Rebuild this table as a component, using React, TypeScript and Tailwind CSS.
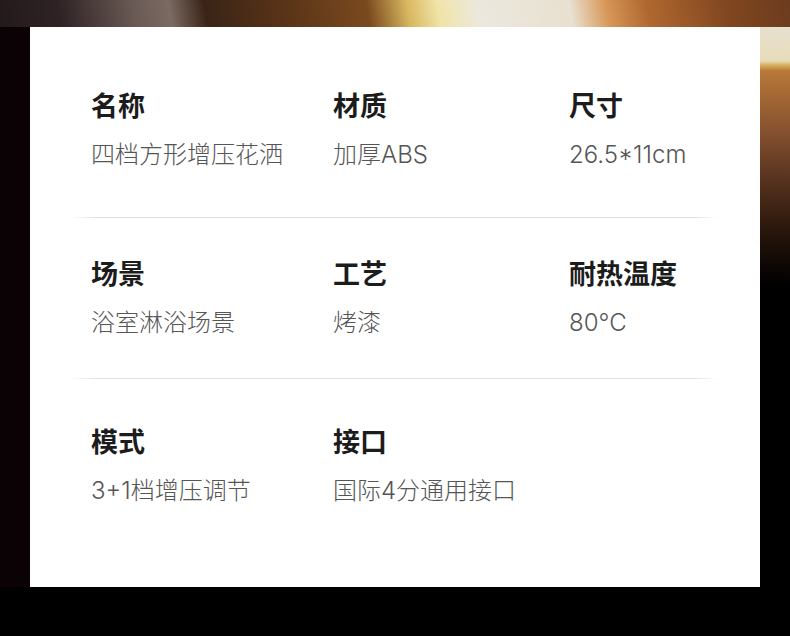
const rows = [
  [
    { label: "名称", value: "四档方形增压花洒" },
    { label: "材质", value: "加厚ABS" },
    { label: "尺寸", value: "26.5*11cm" },
  ],
  [
    { label: "场景", value: "浴室淋浴场景" },
    { label: "工艺", value: "烤漆" },
    { label: "耐热温度", value: "80°C" },
  ],
  [
    { label: "模式", value: "3+1档增压调节" },
    { label: "接口", value: "国际4分通用接口" },
  ],
];

export default function App() {
  return (
    <div className="w-[790px] h-[636px] bg-black flex flex-col overflow-hidden font-['Noto_Sans_CJK_SC','Noto_Sans',sans-serif]">
      {/* top light band */}
      <div className="h-[27px] shrink-0 bg-[linear-gradient(80deg,#231a1c_0px,#2e2224_60px,#6a5a55_135px,#7a6a62_170px,#3a2416_205px,#5a3418_285px,#7a4a1e_365px,#d8b860_405px,#f0e4a8_435px,#ece8de_475px,#e8e0d0_565px,#d89858_600px,#b06830_640px,#80461f_720px,#6a3a1e_790px)]" />

      <div className="flex flex-1">
        <div className="w-[30px] h-[560px] bg-[#0a0204]" />

        {/* spec card */}
        <div className="w-[730px] h-[560px] bg-white pt-[60px]">
          {rows.map((row, i) => (
            <div key={i}>
              {i === 1 && (
                <div className="ml-[40px] w-[648px] h-px mt-[44px] mb-[37px] bg-[linear-gradient(90deg,rgba(224,224,224,0),#e0e0e0_4%,#e0e0e0_96%,rgba(224,224,224,0))]" />
              )}
              {i === 2 && (
                <div className="ml-[40px] w-[648px] h-px mt-[37px] mb-[44px] bg-[linear-gradient(90deg,rgba(224,224,224,0),#e0e0e0_4%,#e0e0e0_96%,rgba(224,224,224,0))]" />
              )}
              <div className="grid grid-cols-[242px_236px_1fr] pl-[61px]">
                {row.map((item) => (
                  <div key={item.label} className="flex flex-col gap-[14px]">
                    <span className="text-[27px] leading-[36px] font-bold text-[#1c1c1c]">
                      {item.label}
                    </span>
                    <span className="text-[24px] leading-[36px] font-light text-[#555555] font-['Inter','Noto_Sans_CJK_SC',sans-serif]">
                      {item.value}
                    </span>
                  </div>
                ))}
              </div>
            </div>
          ))}
        </div>

        <div className="w-[30px] h-[560px] bg-[linear-gradient(180deg,#e6e0d0_0px,#e8dcb8_34px,#d8b060_38px,#b87838_44px,#8a5430_100px,#5a3420_150px,#2c180c_200px,#0c0604_240px,#000_260px)]" />
      </div>
    </div>
  );
}
